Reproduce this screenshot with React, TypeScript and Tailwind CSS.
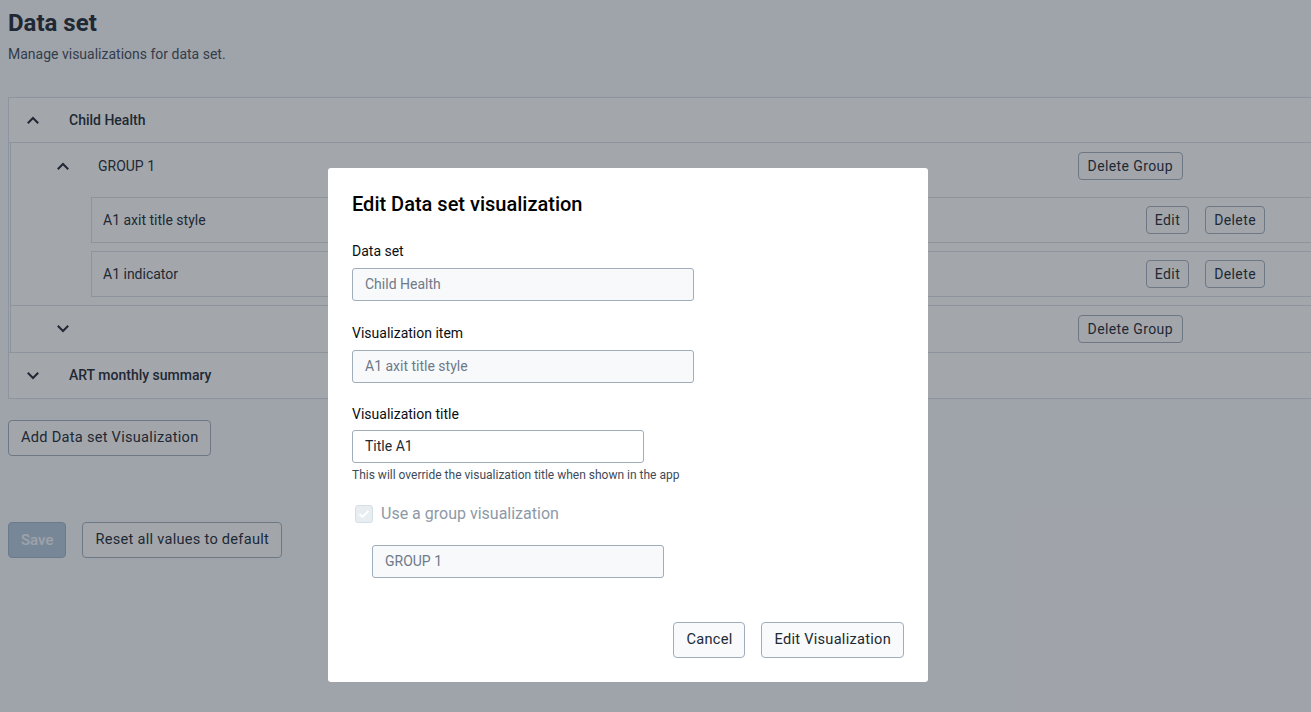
import { ReactNode } from "react";

const Chevron = ({ up }: { up?: boolean }) => (
  <svg width="12" height="8" viewBox="0 0 12 8" fill="none" className="shrink-0">
    <path
      d={up ? "M1.5 6.5 L6 2 L10.5 6.5" : "M1.5 1.5 L6 6 L10.5 1.5"}
      stroke="#212934"
      strokeWidth="2"
      strokeLinecap="square"
    />
  </svg>
);

const Btn = ({ children, className = "" }: { children: ReactNode; className?: string }) => (
  <button
    className={`border border-[#a0adba] bg-[#f9fafb] rounded-[4px] text-[#212934] ${className}`}
  >
    {children}
  </button>
);

const Field = ({ value, width, muted = true }: { value: string; width: string; muted?: boolean }) => (
  <div
    className={`${width} h-[33px] flex items-center px-3 border border-[#a0adba] rounded-[3px] text-[14px] ${
      muted ? "bg-[#f8f9fa] text-[#6e7a8a]" : "bg-white text-[#212934]"
    }`}
  >
    {value}
  </div>
);

const ItemRow = ({ name }: { name: string }) => (
  <div className="ml-[80px] h-[46px] border border-[#d5dde5] bg-[#fbfcfc] flex items-center pl-[11px]">
    <span className="text-[14px] text-[#212934]">{name}</span>
    <div className="ml-auto flex items-center gap-4 pr-[51px]">
      <Btn className="h-[28px] px-[8px] text-[14px] tracking-[0.4px]">Edit</Btn>
      <Btn className="h-[28px] px-[8px] text-[14px] tracking-[0.4px]">Delete</Btn>
    </div>
  </div>
);

export default function App() {
  return (
    <div className="relative h-[712px] w-full overflow-hidden bg-[#f4f6f8] font-['Roboto',sans-serif]">
      <div className="p-2">
        <h1 className="text-[24px] leading-[30px] font-bold text-[#212934]">Data set</h1>
        <p className="mt-[6px] text-[14px] leading-[20px] text-[#404b5a]">Manage visualizations for data set.</p>

        <div className="mt-[33px] w-[1310px] border border-[#d5dde5] bg-[#fbfcfc]">
          <div className="h-[45px] flex items-center pl-[18px] border-b border-[#d5dde5]">
            <Chevron up />
            <span className="ml-[30px] text-[14px] font-medium text-[#212934]">Child Health</span>
          </div>

          <div className="ml-px border-l border-[#d5dde5]">
            <div className="h-[46px] flex items-center pl-[46px]">
              <Chevron up />
              <span className="ml-[29px] text-[14px] text-[#212934]">GROUP 1</span>
              <Btn className="ml-auto mr-[134px] h-[28px] px-[9px] text-[14px] tracking-[0.4px]">Delete Group</Btn>
            </div>
            <div className="flex flex-col gap-[8px] pt-[8px] pb-[8px]">
              <ItemRow name="A1 axit title style" />
              <ItemRow name="A1 indicator" />
            </div>
            <div className="h-[47px] flex items-center pl-[46px] border-t border-[#d5dde5]">
              <Chevron />
              <Btn className="ml-auto mr-[134px] h-[28px] px-[9px] text-[14px] tracking-[0.4px]">Delete Group</Btn>
            </div>
          </div>

          <div className="h-[46px] flex items-center pl-[18px] border-t border-[#d5dde5]">
            <Chevron />
            <span className="ml-[30px] text-[14px] font-medium text-[#212934]">ART monthly summary</span>
          </div>
        </div>

        <Btn className="mt-[21px] h-[36px] px-[12px] text-[14.6px] tracking-[0.27px]">Add Data set Visualization</Btn>

        <div className="mt-[66px] flex gap-4">
          <button className="h-[36px] px-3 rounded-[4px] bg-[#b2c6d9] border border-[#9fb3c6] text-white/80 text-[15px] font-medium">
            Save
          </button>
          <Btn className="h-[36px] px-[12px] text-[14.6px] tracking-[0.27px]">Reset all values to default</Btn>
        </div>
      </div>

      <div className="absolute inset-0 bg-[rgba(33,41,52,0.4)]" />

      <div className="absolute left-[328px] top-[168px] w-[600px] h-[514px] bg-white rounded-[3px] px-6 pt-6 flex flex-col">
        <h2 className="text-[20px] leading-[24px] font-medium text-black">Edit Data set visualization</h2>

        <label className="mt-[26px] text-[14px] leading-[18px] text-[#0a0f14]">Data set</label>
        <div className="mt-2">
          <Field value="Child Health" width="w-[342px]" />
        </div>

        <label className="mt-[23px] text-[14px] leading-[18px] text-[#0a0f14]">Visualization item</label>
        <div className="mt-2">
          <Field value="A1 axit title style" width="w-[342px]" />
        </div>

        <label className="mt-[22px] text-[14px] leading-[18px] text-[#0a0f14]">Visualization title</label>
        <div className="mt-[7px]">
          <Field value="Title A1" width="w-[292px]" muted={false} />
        </div>
        <p className="mt-[4px] text-[12px] leading-[16px] text-[#404b5a]">
          This will override the visualization title when shown in the app
        </p>

        <div className="mt-[21px] flex items-center h-[20px]">
          <span className="ml-[3px] w-[18px] h-[18px] rounded-[3px] border border-[#d5dde5] bg-[#e8edf2] flex items-center justify-center">
            <svg width="12" height="10" viewBox="0 0 12 10" fill="none">
              <path d="M1.5 5 L4.5 8 L10.5 2" stroke="white" strokeWidth="1.8" />
            </svg>
          </span>
          <span className="ml-[8px] text-[16px] text-[#8e99a7]">Use a group visualization</span>
        </div>

        <div className="mt-[21px] ml-[20px]">
          <Field value="GROUP 1" width="w-[292px]" />
        </div>

        <div className="mt-[44px] flex justify-end gap-4">
          <Btn className="h-[36px] px-[12px] text-[14.6px] tracking-[0.27px]">Cancel</Btn>
          <Btn className="h-[36px] px-[12px] text-[14.6px] tracking-[0.27px]">Edit Visualization</Btn>
        </div>
      </div>
    </div>
  );
}
